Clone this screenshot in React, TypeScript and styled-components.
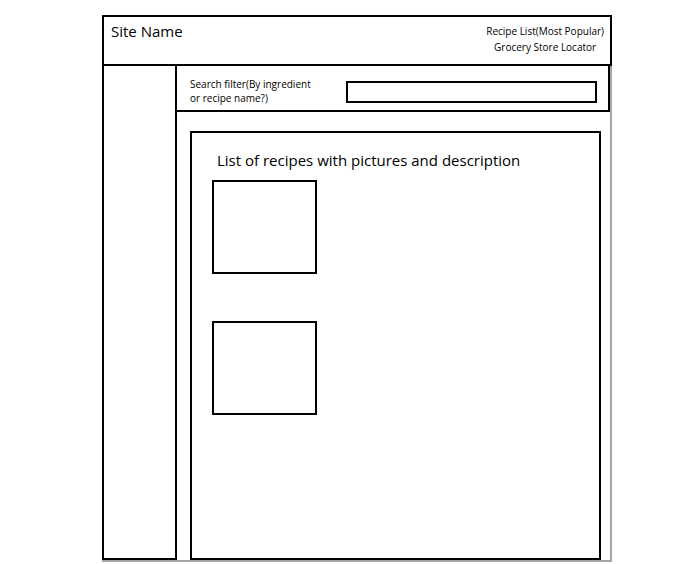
import React, { FC } from "react";
import styled, { createGlobalStyle } from "styled-components";

const GlobalStyle = createGlobalStyle`
  body {
    margin: 0;
    background: #fff;
    font-family: "Open Sans", "Noto Sans", sans-serif;
    color: #000;
  }
`;

const Page = styled.div`
  padding: 15px 0 0 102px;
`;

const Frame = styled.div`
  width: 510px;
  height: 547px;
  box-sizing: border-box;
  border-right: 2px solid #a6a6a6;
  border-bottom: 2px solid #a6a6a6;
  display: flex;
  flex-direction: column;
`;

const Header = styled.header`
  height: 51px;
  margin-right: -2px;
  box-sizing: border-box;
  border: 2px solid #000;
  display: flex;
  justify-content: space-between;
  align-items: flex-start;
`;

const SiteName = styled.div`
  font-size: 15px;
  line-height: 20px;
  padding: 4px 0 0 7px;
`;

const Nav = styled.nav`
  display: flex;
  flex-direction: column;
  align-items: center;
  padding: 6px 6px 0 0;
  font-size: 10px;
  line-height: 16px;
`;

const Body = styled.div`
  flex: 1;
  display: flex;
  min-height: 0;
`;

const Sidebar = styled.aside`
  width: 75px;
  box-sizing: border-box;
  border: 2px solid #000;
  border-top: 0;
`;

const Main = styled.div`
  flex: 1;
  display: flex;
  flex-direction: column;
`;

const SearchBar = styled.div`
  height: 46px;
  box-sizing: border-box;
  border-right: 2px solid #000;
  border-bottom: 2px solid #000;
  display: flex;
  align-items: flex-start;
  padding: 11px 0 0 13px;
`;

const SearchLabel = styled.div`
  width: 156px;
  font-size: 10px;
  line-height: 14px;
`;

const SearchInput = styled.div`
  margin-top: 4px;
  width: 251px;
  height: 22px;
  box-sizing: border-box;
  border: 2px solid #000;
`;

const ContentArea = styled.div`
  padding: 19px 0 0 13px;
`;

const RecipeList = styled.section`
  width: 411px;
  height: 429px;
  box-sizing: border-box;
  border: 2px solid #000;
  padding: 17px 0 0 20px;
`;

const ListTitle = styled.div`
  font-size: 15px;
  line-height: 20px;
  padding-left: 5px;
  margin-bottom: 10px;
`;

const Thumb = styled.div<{ $gap: number }>`
  width: 105px;
  height: 94px;
  box-sizing: border-box;
  border: 2px solid #000;
  margin-top: ${(p) => p.$gap}px;
`;

const App: FC = function () {
  return (
    <Page>
      <GlobalStyle />
      <Frame>
        <Header>
          <SiteName>Site Name</SiteName>
          <Nav>
            <div>Recipe List(Most Popular)</div>
            <div>Grocery Store Locator</div>
          </Nav>
        </Header>
        <Body>
          <Sidebar />
          <Main>
            <SearchBar>
              <SearchLabel>
                Search filter(By ingredient
                <br />
                or recipe name?)
              </SearchLabel>
              <SearchInput />
            </SearchBar>
            <ContentArea>
              <RecipeList>
                <ListTitle>List of recipes with pictures and description</ListTitle>
                <Thumb $gap={0} />
                <Thumb $gap={47} />
              </RecipeList>
            </ContentArea>
          </Main>
        </Body>
      </Frame>
    </Page>
  );
};

export default App;
